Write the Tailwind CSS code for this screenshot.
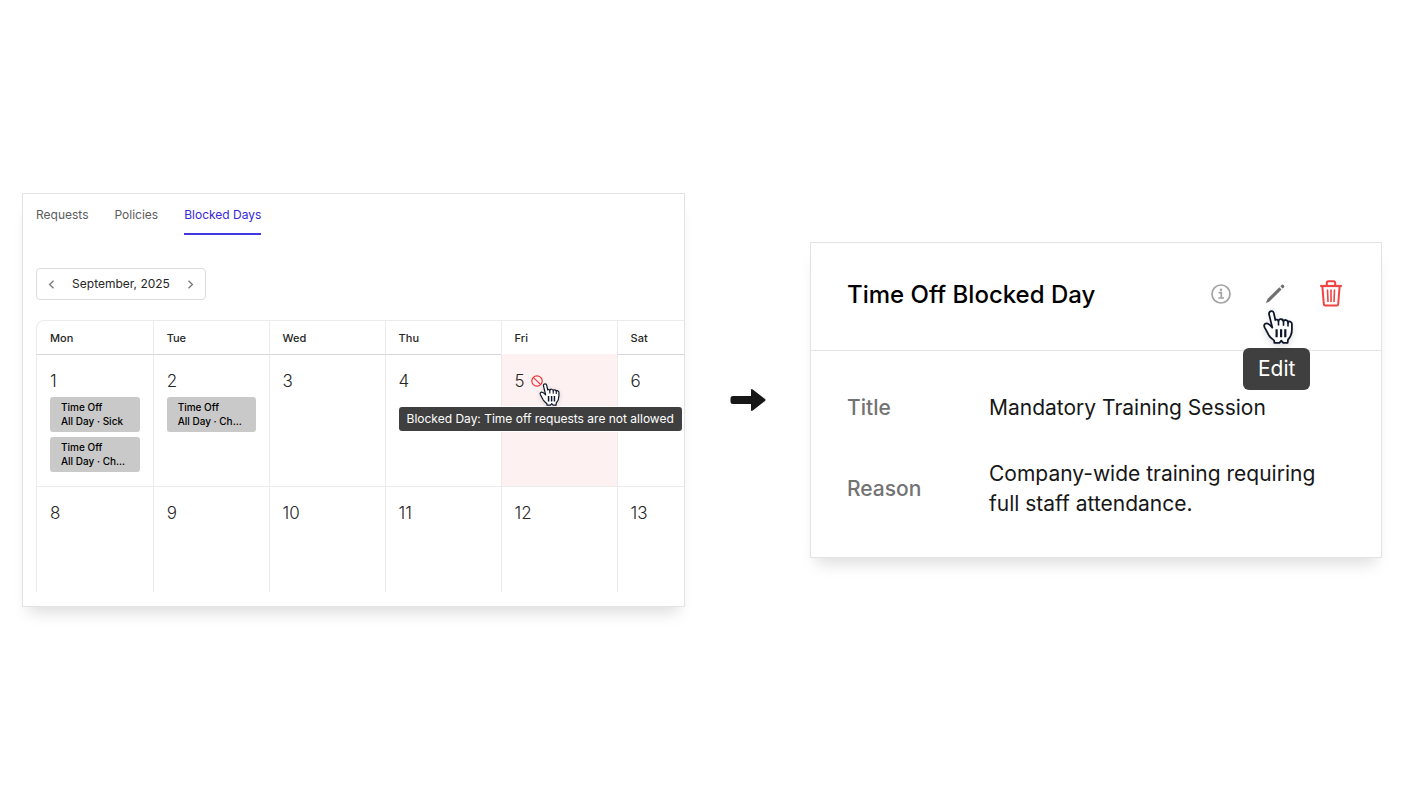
<!DOCTYPE html>
<html lang="en">
  <head>
    <meta charset="UTF-8" />
    <meta name="viewport" content="width=device-width, initial-scale=1.0" />
    <title>Blocked Days</title>
    <!--tailwindcss CDN-->
    <script src="https://cdn.jsdelivr.net/npm/@tailwindcss/browser@4"></script>
  </head>
  <body class="bg-white font-['Inter',sans-serif] text-[#262626]">
    <!--Shared hand cursor-->
    <svg class="hidden">
      <symbol id="hand" viewBox="0 0 30 34">
        <path
          d="M8.6 1.2C6.8 1.2 5.7 2.6 6.1 4.4L9.3 17.6C7.8 16 5.6 13.2 3.5 13.4C1.3 13.6.7 15.4 1.6 17.3L5.8 25.2C7.2 27.6 9.6 29 11.2 30.6L11.3 32.8L16.4 32.8L18.3 30.6L20.3 32.8L24.6 32.8L25 29.6C27.4 27 28.9 23 28.9 19.4L28.9 14C28.9 11.2 25.6 10.6 25 12.8C25.2 9.6 21 9 20.5 11.8C20.4 8.8 16 8.2 15.5 11.2C15 9.6 13 9.2 12.3 10L10.9 3.4C10.6 2 9.7 1.2 8.6 1.2Z"
          fill="#fff"
          stroke="#0f172a"
          stroke-width="1.8"
          stroke-linejoin="round"
        />
        <path
          d="M25 12.8V16.4M20.5 11.8V15.8M15.5 11.2V15.4"
          stroke="#0f172a"
          stroke-width="1.6"
        />
        <path
          d="M13.6 19.3V27.3M18.1 19.3V27.3M22.3 19.3V27.3"
          stroke="#0f172a"
          stroke-width="2.2"
        />
      </symbol>
    </svg>

    <main
      class="grid min-h-screen grid-cols-[663fr_37px_572fr] items-center gap-11 pr-[21px] pl-[22px]"
    >
      <!--Calendar-->
      <section
        class="border border-[#e3e3e5] bg-white pb-[14px] pl-[13px] shadow-[0_12px_14px_-6px_rgba(0,0,0,0.13)]"
      >
        <nav class="flex gap-[26px] pt-[11px] text-xs leading-5 text-[#5c5c5c]">
          <a href="#" class="pb-2">Requests</a>
          <a href="#" class="pb-2">Policies</a>
          <a href="#" class="border-b-2 border-[#4338e0] pb-2 text-[#3628dc]">Blocked Days</a>
        </nav>

        <div
          class="mt-[33px] flex h-8 w-[170px] items-center justify-between rounded border border-[#dcdcde] px-[10px]"
        >
          <button aria-label="Previous month">
            <svg class="size-[9px]" viewBox="0 0 9 9" fill="none" stroke="#777" stroke-width="1.3">
              <path d="M6.5.8L2.6 4.5L6.5 8.2" />
            </svg>
          </button>
          <span class="text-xs">September, 2025</span>
          <button aria-label="Next month">
            <svg class="size-[9px]" viewBox="0 0 9 9" fill="none" stroke="#777" stroke-width="1.3">
              <path d="M2.5.8L6.4 4.5L2.5 8.2" />
            </svg>
          </button>
        </div>

        <table class="mt-5 w-full table-fixed border-separate border-spacing-0">
          <thead>
            <tr
              class="text-left text-[11px] leading-4 [&>th]:h-[35px] [&>th]:border-t [&>th]:border-b [&>th]:border-l [&>th]:border-[#ebebec] [&>th]:border-b-[#d6d6d8] [&>th]:pl-[13px] [&>th]:font-medium"
            >
              <th class="w-[18%] rounded-tl-lg">Mon</th>
              <th class="w-[17.9%]">Tue</th>
              <th class="w-[17.9%]">Wed</th>
              <th class="w-[17.9%]">Thu</th>
              <th class="w-[17.9%] border-b-[#fef1f1]!">Fri</th>
              <th>Sat</th>
            </tr>
          </thead>
          <tbody
            class="text-[17px] leading-6 font-light [&_td]:border-l [&_td]:border-[#ebebec] [&_td]:pt-[14px] [&_td]:pl-[13px] [&_td]:align-top"
          >
            <tr class="[&>td]:h-[132px] [&>td]:border-b">
              <td class="pr-[13px]">
                1
                <div
                  class="mt-1 rounded-[3px] bg-[#c9c9c9] pt-[3px] pb-1 pl-[11px] text-[10px] leading-[14px] font-medium text-black"
                >
                  <p>Time Off</p>
                  <p class="whitespace-nowrap">All Day · Sick</p>
                </div>
                <div
                  class="mt-[5px] rounded-[3px] bg-[#c9c9c9] pt-[3px] pb-1 pl-[11px] text-[10px] leading-[14px] font-medium text-black"
                >
                  <p>Time Off</p>
                  <p class="whitespace-nowrap">All Day · Ch...</p>
                </div>
              </td>
              <td class="pr-[13px]">
                2
                <div
                  class="mt-1 rounded-[3px] bg-[#c9c9c9] pt-[3px] pb-1 pl-[11px] text-[10px] leading-[14px] font-medium text-black"
                >
                  <p>Time Off</p>
                  <p class="whitespace-nowrap">All Day · Ch...</p>
                </div>
              </td>
              <td>3</td>
              <td>4</td>
              <td class="bg-[#fef1f1]">
                <div class="relative flex items-center gap-[6px]">
                  5
                  <svg
                    class="size-3"
                    viewBox="0 0 12 12"
                    fill="none"
                    stroke="#ef3338"
                    stroke-width="1.2"
                  >
                    <circle cx="6" cy="6" r="5.2" />
                    <path d="M2.3 2.3L9.7 9.7" />
                  </svg>
                  <!--Tooltip and cursor-->
                  <span
                    class="absolute top-[38px] left-1/2 -translate-x-[167px] rounded-[3px] bg-[#3f3f3f] px-2 text-xs leading-6 font-normal whitespace-nowrap text-white ring-1 ring-white"
                  >
                    Blocked Day: Time off requests are not allowed
                  </span>
                  <svg class="absolute top-[14px] left-6 h-[23px] w-[21px] drop-shadow-sm">
                    <use href="#hand" />
                  </svg>
                </div>
              </td>
              <td>6</td>
            </tr>
            <tr class="[&>td]:h-[105px]">
              <td>8</td>
              <td>9</td>
              <td>10</td>
              <td>11</td>
              <td>12</td>
              <td>13</td>
            </tr>
          </tbody>
        </table>
      </section>

      <!--Arrow-->
      <svg class="h-6 w-9 justify-self-end" viewBox="0 0 36 24" fill="#171717">
        <path
          d="M3 8H21V2.2Q21 .2 22.8 1.4L35 11Q36 12 35 13L22.8 22.6Q21 23.8 21 21.8V16H3Q.5 16 .5 13.5V10.5Q.5 8 3 8Z"
        />
      </svg>

      <!--Blocked day details-->
      <section
        class="border border-[#e3e3e5] bg-white shadow-[0_12px_14px_-6px_rgba(0,0,0,0.13)]"
      >
        <header
          class="flex h-[108px] items-center justify-between border-b border-[#e3e3e8] pr-[38px] pb-1 pl-9"
        >
          <h1 class="text-2xl font-medium text-black">Time Off Blocked Day</h1>
          <div class="flex items-center gap-[34px] pb-0.5">
            <button aria-label="Info">
              <svg class="size-5" viewBox="0 0 20 20" fill="none" stroke="#a3a3a3">
                <circle cx="10" cy="10" r="9" stroke-width="1.7" />
                <path d="M7.6 8.7H10.3V14M7.3 14H13" stroke-width="1.7" />
                <circle cx="10" cy="5.8" r="1.2" fill="#a3a3a3" stroke="none" />
              </svg>
            </button>
            <div class="relative">
              <button class="block" aria-label="Edit">
                <svg class="size-5" viewBox="0 0 20 20" fill="#707070">
                  <path d="M14.3 3.2L16.6 5.5L4.7 17.3L.8 19.3L.7 19.2L2.7 14.8Z" />
                  <path
                    d="M15.3 2.2L16.5 1Q17.5 0 18.7 1.1Q20 2.5 19 3.5L17.6 4.5Z"
                  />
                </svg>
              </button>
              <span
                class="absolute top-16 left-1/2 -translate-x-8 rounded-md bg-[#3f3f3f] px-[15px] text-[21px] leading-[42px] text-white"
              >
                Edit
              </span>
              <svg class="absolute top-[26px] -left-0.5 h-[34px] w-[30px] drop-shadow-md">
                <use href="#hand" />
              </svg>
            </div>
            <button aria-label="Delete">
              <svg class="h-[27px] w-6" viewBox="0 0 24 27" fill="none" stroke="#ef4444">
                <path d="M1.2 6H22.8" stroke-width="2.2" />
                <path
                  d="M7.8 5.5V2.8Q7.8 1.2 9.4 1.2H14.6Q16.2 1.2 16.2 2.8V5.5"
                  stroke-width="2"
                />
                <path
                  d="M3.4 6.5L4.8 24.2Q4.9 25.6 6.2 25.6H17.8Q19.1 25.6 19.2 24.2L20.6 6.5"
                  stroke-width="2"
                />
                <path d="M8.5 9.5L9 22M12 9.5V22M15.5 9.5L15 22" stroke-width="1.6" />
              </svg>
            </button>
          </div>
        </header>
        <dl
          class="grid grid-cols-[106px_1fr] items-center gap-x-9 gap-y-9 px-9 pt-[42px] pb-[38px] text-[21px] leading-[30px] text-[#171717]"
        >
          <dt class="font-medium text-[#737373]">Title</dt>
          <dd>Mandatory Training Session</dd>
          <dt class="font-medium text-[#737373]">Reason</dt>
          <dd>Company-wide training requiring<br />full staff attendance.</dd>
        </dl>
      </section>
    </main>
  </body>
</html>
